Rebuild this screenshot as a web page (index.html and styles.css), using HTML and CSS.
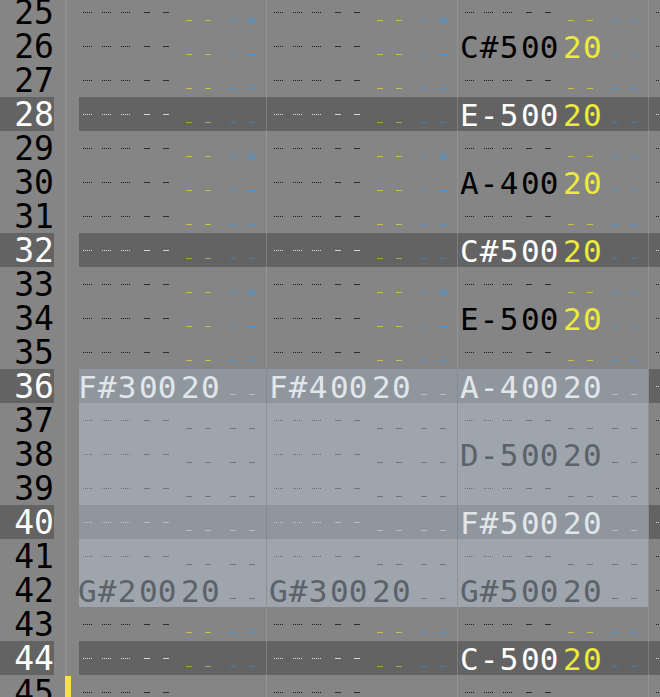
FILE: index.html
```html
<!DOCTYPE html>
<html>
<head>
<meta charset="utf-8">
<link rel="stylesheet" href="styles.css">
</head>
<body>
<div class="grid">

<div class="row"><div class="rn">25</div><div class="g1"></div><div class="vl"></div><div class="g2"></div>
<div class="trk first"><div class="nc"><i></i><i></i><i></i></div><div class="ic"><b></b><b></b></div><div class="vc"><b></b><b></b></div><div class="pc"><b></b><b></b></div></div><div class="sep"></div>
<div class="trk"><div class="nc"><i></i><i></i><i></i></div><div class="ic"><b></b><b></b></div><div class="vc"><b></b><b></b></div><div class="pc"><b></b><b></b></div></div><div class="sep"></div>
<div class="trk"><div class="nc"><i></i><i></i><i></i></div><div class="ic"><b></b><b></b></div><div class="vc"><b></b><b></b></div><div class="pc"><b></b><b></b></div></div><div class="sep"></div>
<div class="trk last"><div class="nc"><i></i><i></i><i></i></div></div></div>

<div class="row"><div class="rn">26</div><div class="g1"></div><div class="vl"></div><div class="g2"></div>
<div class="trk first"><div class="nc"><i></i><i></i><i></i></div><div class="ic"><b></b><b></b></div><div class="vc"><b></b><b></b></div><div class="pc"><b></b><b></b></div></div><div class="sep"></div>
<div class="trk"><div class="nc"><i></i><i></i><i></i></div><div class="ic"><b></b><b></b></div><div class="vc"><b></b><b></b></div><div class="pc"><b></b><b></b></div></div><div class="sep"></div>
<div class="trk"><div class="nc t">C#5</div><div class="ic t">00</div><div class="vc t">20</div><div class="pc"><b></b><b></b></div></div><div class="sep"></div>
<div class="trk last"><div class="nc"><i></i><i></i><i></i></div></div></div>

<div class="row"><div class="rn">27</div><div class="g1"></div><div class="vl"></div><div class="g2"></div>
<div class="trk first"><div class="nc"><i></i><i></i><i></i></div><div class="ic"><b></b><b></b></div><div class="vc"><b></b><b></b></div><div class="pc"><b></b><b></b></div></div><div class="sep"></div>
<div class="trk"><div class="nc"><i></i><i></i><i></i></div><div class="ic"><b></b><b></b></div><div class="vc"><b></b><b></b></div><div class="pc"><b></b><b></b></div></div><div class="sep"></div>
<div class="trk"><div class="nc"><i></i><i></i><i></i></div><div class="ic"><b></b><b></b></div><div class="vc"><b></b><b></b></div><div class="pc"><b></b><b></b></div></div><div class="sep"></div>
<div class="trk last"><div class="nc"><i></i><i></i><i></i></div></div></div>

<div class="row hl"><div class="rn">28</div><div class="g1"></div><div class="vl"></div><div class="g2"></div>
<div class="trk first"><div class="nc"><i></i><i></i><i></i></div><div class="ic"><b></b><b></b></div><div class="vc"><b></b><b></b></div><div class="pc"><b></b><b></b></div></div><div class="sep"></div>
<div class="trk"><div class="nc"><i></i><i></i><i></i></div><div class="ic"><b></b><b></b></div><div class="vc"><b></b><b></b></div><div class="pc"><b></b><b></b></div></div><div class="sep"></div>
<div class="trk"><div class="nc t">E-5</div><div class="ic t">00</div><div class="vc t">20</div><div class="pc"><b></b><b></b></div></div><div class="sep"></div>
<div class="trk last"><div class="nc"><i></i><i></i><i></i></div></div></div>

<div class="row"><div class="rn">29</div><div class="g1"></div><div class="vl"></div><div class="g2"></div>
<div class="trk first"><div class="nc"><i></i><i></i><i></i></div><div class="ic"><b></b><b></b></div><div class="vc"><b></b><b></b></div><div class="pc"><b></b><b></b></div></div><div class="sep"></div>
<div class="trk"><div class="nc"><i></i><i></i><i></i></div><div class="ic"><b></b><b></b></div><div class="vc"><b></b><b></b></div><div class="pc"><b></b><b></b></div></div><div class="sep"></div>
<div class="trk"><div class="nc"><i></i><i></i><i></i></div><div class="ic"><b></b><b></b></div><div class="vc"><b></b><b></b></div><div class="pc"><b></b><b></b></div></div><div class="sep"></div>
<div class="trk last"><div class="nc"><i></i><i></i><i></i></div></div></div>

<div class="row"><div class="rn">30</div><div class="g1"></div><div class="vl"></div><div class="g2"></div>
<div class="trk first"><div class="nc"><i></i><i></i><i></i></div><div class="ic"><b></b><b></b></div><div class="vc"><b></b><b></b></div><div class="pc"><b></b><b></b></div></div><div class="sep"></div>
<div class="trk"><div class="nc"><i></i><i></i><i></i></div><div class="ic"><b></b><b></b></div><div class="vc"><b></b><b></b></div><div class="pc"><b></b><b></b></div></div><div class="sep"></div>
<div class="trk"><div class="nc t">A-4</div><div class="ic t">00</div><div class="vc t">20</div><div class="pc"><b></b><b></b></div></div><div class="sep"></div>
<div class="trk last"><div class="nc"><i></i><i></i><i></i></div></div></div>

<div class="row"><div class="rn">31</div><div class="g1"></div><div class="vl"></div><div class="g2"></div>
<div class="trk first"><div class="nc"><i></i><i></i><i></i></div><div class="ic"><b></b><b></b></div><div class="vc"><b></b><b></b></div><div class="pc"><b></b><b></b></div></div><div class="sep"></div>
<div class="trk"><div class="nc"><i></i><i></i><i></i></div><div class="ic"><b></b><b></b></div><div class="vc"><b></b><b></b></div><div class="pc"><b></b><b></b></div></div><div class="sep"></div>
<div class="trk"><div class="nc"><i></i><i></i><i></i></div><div class="ic"><b></b><b></b></div><div class="vc"><b></b><b></b></div><div class="pc"><b></b><b></b></div></div><div class="sep"></div>
<div class="trk last"><div class="nc"><i></i><i></i><i></i></div></div></div>

<div class="row hl"><div class="rn">32</div><div class="g1"></div><div class="vl"></div><div class="g2"></div>
<div class="trk first"><div class="nc"><i></i><i></i><i></i></div><div class="ic"><b></b><b></b></div><div class="vc"><b></b><b></b></div><div class="pc"><b></b><b></b></div></div><div class="sep"></div>
<div class="trk"><div class="nc"><i></i><i></i><i></i></div><div class="ic"><b></b><b></b></div><div class="vc"><b></b><b></b></div><div class="pc"><b></b><b></b></div></div><div class="sep"></div>
<div class="trk"><div class="nc t">C#5</div><div class="ic t">00</div><div class="vc t">20</div><div class="pc"><b></b><b></b></div></div><div class="sep"></div>
<div class="trk last"><div class="nc"><i></i><i></i><i></i></div></div></div>

<div class="row"><div class="rn">33</div><div class="g1"></div><div class="vl"></div><div class="g2"></div>
<div class="trk first"><div class="nc"><i></i><i></i><i></i></div><div class="ic"><b></b><b></b></div><div class="vc"><b></b><b></b></div><div class="pc"><b></b><b></b></div></div><div class="sep"></div>
<div class="trk"><div class="nc"><i></i><i></i><i></i></div><div class="ic"><b></b><b></b></div><div class="vc"><b></b><b></b></div><div class="pc"><b></b><b></b></div></div><div class="sep"></div>
<div class="trk"><div class="nc"><i></i><i></i><i></i></div><div class="ic"><b></b><b></b></div><div class="vc"><b></b><b></b></div><div class="pc"><b></b><b></b></div></div><div class="sep"></div>
<div class="trk last"><div class="nc"><i></i><i></i><i></i></div></div></div>

<div class="row"><div class="rn">34</div><div class="g1"></div><div class="vl"></div><div class="g2"></div>
<div class="trk first"><div class="nc"><i></i><i></i><i></i></div><div class="ic"><b></b><b></b></div><div class="vc"><b></b><b></b></div><div class="pc"><b></b><b></b></div></div><div class="sep"></div>
<div class="trk"><div class="nc"><i></i><i></i><i></i></div><div class="ic"><b></b><b></b></div><div class="vc"><b></b><b></b></div><div class="pc"><b></b><b></b></div></div><div class="sep"></div>
<div class="trk"><div class="nc t">E-5</div><div class="ic t">00</div><div class="vc t">20</div><div class="pc"><b></b><b></b></div></div><div class="sep"></div>
<div class="trk last"><div class="nc"><i></i><i></i><i></i></div></div></div>

<div class="row"><div class="rn">35</div><div class="g1"></div><div class="vl"></div><div class="g2"></div>
<div class="trk first"><div class="nc"><i></i><i></i><i></i></div><div class="ic"><b></b><b></b></div><div class="vc"><b></b><b></b></div><div class="pc"><b></b><b></b></div></div><div class="sep"></div>
<div class="trk"><div class="nc"><i></i><i></i><i></i></div><div class="ic"><b></b><b></b></div><div class="vc"><b></b><b></b></div><div class="pc"><b></b><b></b></div></div><div class="sep"></div>
<div class="trk"><div class="nc"><i></i><i></i><i></i></div><div class="ic"><b></b><b></b></div><div class="vc"><b></b><b></b></div><div class="pc"><b></b><b></b></div></div><div class="sep"></div>
<div class="trk last"><div class="nc"><i></i><i></i><i></i></div></div></div>

<div class="row hl"><div class="rn">36</div><div class="g1"></div><div class="vl"></div><div class="g2"></div>
<div class="trk first sel"><div class="nc t">F#3</div><div class="ic t">00</div><div class="vc t">20</div><div class="pc"><b></b><b></b></div></div><div class="sep sel"></div>
<div class="trk sel"><div class="nc t">F#4</div><div class="ic t">00</div><div class="vc t">20</div><div class="pc"><b></b><b></b></div></div><div class="sep sel"></div>
<div class="trk sel"><div class="nc t">A-4</div><div class="ic t">00</div><div class="vc t">20</div><div class="pc"><b></b><b></b></div></div><div class="sep sel"></div>
<div class="trk last"><div class="nc"><i></i><i></i><i></i></div></div></div>

<div class="row"><div class="rn">37</div><div class="g1"></div><div class="vl"></div><div class="g2"></div>
<div class="trk first sel"><div class="nc"><i></i><i></i><i></i></div><div class="ic"><b></b><b></b></div><div class="vc"><b></b><b></b></div><div class="pc"><b></b><b></b></div></div><div class="sep sel"></div>
<div class="trk sel"><div class="nc"><i></i><i></i><i></i></div><div class="ic"><b></b><b></b></div><div class="vc"><b></b><b></b></div><div class="pc"><b></b><b></b></div></div><div class="sep sel"></div>
<div class="trk sel"><div class="nc"><i></i><i></i><i></i></div><div class="ic"><b></b><b></b></div><div class="vc"><b></b><b></b></div><div class="pc"><b></b><b></b></div></div><div class="sep sel"></div>
<div class="trk last"><div class="nc"><i></i><i></i><i></i></div></div></div>

<div class="row"><div class="rn">38</div><div class="g1"></div><div class="vl"></div><div class="g2"></div>
<div class="trk first sel"><div class="nc"><i></i><i></i><i></i></div><div class="ic"><b></b><b></b></div><div class="vc"><b></b><b></b></div><div class="pc"><b></b><b></b></div></div><div class="sep sel"></div>
<div class="trk sel"><div class="nc"><i></i><i></i><i></i></div><div class="ic"><b></b><b></b></div><div class="vc"><b></b><b></b></div><div class="pc"><b></b><b></b></div></div><div class="sep sel"></div>
<div class="trk sel"><div class="nc t">D-5</div><div class="ic t">00</div><div class="vc t">20</div><div class="pc"><b></b><b></b></div></div><div class="sep sel"></div>
<div class="trk last"><div class="nc"><i></i><i></i><i></i></div></div></div>

<div class="row"><div class="rn">39</div><div class="g1"></div><div class="vl"></div><div class="g2"></div>
<div class="trk first sel"><div class="nc"><i></i><i></i><i></i></div><div class="ic"><b></b><b></b></div><div class="vc"><b></b><b></b></div><div class="pc"><b></b><b></b></div></div><div class="sep sel"></div>
<div class="trk sel"><div class="nc"><i></i><i></i><i></i></div><div class="ic"><b></b><b></b></div><div class="vc"><b></b><b></b></div><div class="pc"><b></b><b></b></div></div><div class="sep sel"></div>
<div class="trk sel"><div class="nc"><i></i><i></i><i></i></div><div class="ic"><b></b><b></b></div><div class="vc"><b></b><b></b></div><div class="pc"><b></b><b></b></div></div><div class="sep sel"></div>
<div class="trk last"><div class="nc"><i></i><i></i><i></i></div></div></div>

<div class="row hl"><div class="rn">40</div><div class="g1"></div><div class="vl"></div><div class="g2"></div>
<div class="trk first sel"><div class="nc"><i></i><i></i><i></i></div><div class="ic"><b></b><b></b></div><div class="vc"><b></b><b></b></div><div class="pc"><b></b><b></b></div></div><div class="sep sel"></div>
<div class="trk sel"><div class="nc"><i></i><i></i><i></i></div><div class="ic"><b></b><b></b></div><div class="vc"><b></b><b></b></div><div class="pc"><b></b><b></b></div></div><div class="sep sel"></div>
<div class="trk sel"><div class="nc t">F#5</div><div class="ic t">00</div><div class="vc t">20</div><div class="pc"><b></b><b></b></div></div><div class="sep sel"></div>
<div class="trk last"><div class="nc"><i></i><i></i><i></i></div></div></div>

<div class="row"><div class="rn">41</div><div class="g1"></div><div class="vl"></div><div class="g2"></div>
<div class="trk first sel"><div class="nc"><i></i><i></i><i></i></div><div class="ic"><b></b><b></b></div><div class="vc"><b></b><b></b></div><div class="pc"><b></b><b></b></div></div><div class="sep sel"></div>
<div class="trk sel"><div class="nc"><i></i><i></i><i></i></div><div class="ic"><b></b><b></b></div><div class="vc"><b></b><b></b></div><div class="pc"><b></b><b></b></div></div><div class="sep sel"></div>
<div class="trk sel"><div class="nc"><i></i><i></i><i></i></div><div class="ic"><b></b><b></b></div><div class="vc"><b></b><b></b></div><div class="pc"><b></b><b></b></div></div><div class="sep sel"></div>
<div class="trk last"><div class="nc"><i></i><i></i><i></i></div></div></div>

<div class="row"><div class="rn">42</div><div class="g1"></div><div class="vl"></div><div class="g2"></div>
<div class="trk first sel"><div class="nc t">G#2</div><div class="ic t">00</div><div class="vc t">20</div><div class="pc"><b></b><b></b></div></div><div class="sep sel"></div>
<div class="trk sel"><div class="nc t">G#3</div><div class="ic t">00</div><div class="vc t">20</div><div class="pc"><b></b><b></b></div></div><div class="sep sel"></div>
<div class="trk sel"><div class="nc t">G#5</div><div class="ic t">00</div><div class="vc t">20</div><div class="pc"><b></b><b></b></div></div><div class="sep sel"></div>
<div class="trk last"><div class="nc"><i></i><i></i><i></i></div></div></div>

<div class="row"><div class="rn">43</div><div class="g1"></div><div class="vl"></div><div class="g2"></div>
<div class="trk first"><div class="nc"><i></i><i></i><i></i></div><div class="ic"><b></b><b></b></div><div class="vc"><b></b><b></b></div><div class="pc"><b></b><b></b></div></div><div class="sep"></div>
<div class="trk"><div class="nc"><i></i><i></i><i></i></div><div class="ic"><b></b><b></b></div><div class="vc"><b></b><b></b></div><div class="pc"><b></b><b></b></div></div><div class="sep"></div>
<div class="trk"><div class="nc"><i></i><i></i><i></i></div><div class="ic"><b></b><b></b></div><div class="vc"><b></b><b></b></div><div class="pc"><b></b><b></b></div></div><div class="sep"></div>
<div class="trk last"><div class="nc"><i></i><i></i><i></i></div></div></div>

<div class="row hl"><div class="rn">44</div><div class="g1"></div><div class="vl"></div><div class="g2"></div>
<div class="trk first"><div class="nc"><i></i><i></i><i></i></div><div class="ic"><b></b><b></b></div><div class="vc"><b></b><b></b></div><div class="pc"><b></b><b></b></div></div><div class="sep"></div>
<div class="trk"><div class="nc"><i></i><i></i><i></i></div><div class="ic"><b></b><b></b></div><div class="vc"><b></b><b></b></div><div class="pc"><b></b><b></b></div></div><div class="sep"></div>
<div class="trk"><div class="nc t">C-5</div><div class="ic t">00</div><div class="vc t">20</div><div class="pc"><b></b><b></b></div></div><div class="sep"></div>
<div class="trk last"><div class="nc"><i></i><i></i><i></i></div></div></div>

<div class="row"><div class="rn">45</div><div class="g1"></div><div class="vl"><span class="cursor"></span></div><div class="g2"></div>
<div class="trk first"><div class="nc"><i></i><i></i><i></i></div><div class="ic"><b></b><b></b></div><div class="vc"><b></b><b></b></div><div class="pc"><b></b><b></b></div></div><div class="sep"></div>
<div class="trk"><div class="nc"><i></i><i></i><i></i></div><div class="ic"><b></b><b></b></div><div class="vc"><b></b><b></b></div><div class="pc"><b></b><b></b></div></div><div class="sep"></div>
<div class="trk"><div class="nc"><i></i><i></i><i></i></div><div class="ic"><b></b><b></b></div><div class="vc"><b></b><b></b></div><div class="pc"><b></b><b></b></div></div><div class="sep"></div>
<div class="trk last"><div class="nc"><i></i><i></i><i></i></div></div></div>

</div>
</body>
</html>
```
FILE: styles.css
```css
html, body {
  margin: 0;
  padding: 0;
}
body {
  background: #858585;
  width: 660px;
  height: 697px;
  overflow: hidden;
  font-family: "DejaVu Sans Mono", "Liberation Mono", monospace;
}
.grid {
  margin-top: -5px;
  width: 660px;
  overflow: hidden;
}
.row {
  display: flex;
  height: 34px;
}
.rn {
  width: 54px;
  height: 34px;
  flex: none;
  text-align: right;
  font-size: 33px;
  line-height: 32px;
  padding-top: 2px;
  color: #000;
  box-sizing: border-box;
}
.row.hl .rn {
  background: #636363;
  color: #fff;
}
.g1 { width: 11px; flex: none; }
.vl {
  width: 2px;
  flex: none;
  background: #8f8f8f;
  position: relative;
}
.g2 { width: 12px; flex: none; }
.cursor {
  position: absolute;
  left: 0;
  top: 1px;
  width: 6px;
  height: 33px;
  background: #f6e14a;
}
.trk {
  width: 190px;
  flex: none;
  display: flex;
}
.trk.first { width: 187px; }
.trk.first > .nc { margin-left: -3px; }
.trk.last { flex: 1; width: auto; min-width: 0; overflow: hidden; }
.sep {
  width: 1px;
  flex: none;
  background: #939393;
}
.row.hl .trk { background: #636363; }
.row.hl .sep { background: #7c7c7c; }
.trk.sel { background: #9ea5ad; }
.row.hl .trk.sel { background: #8f969e; }
.sep.sel { background: #8b9198; }
.row.hl .sep.sel { background: #858b92; }

/* sub columns */
.nc, .ic, .vc, .pc {
  display: flex;
  flex: none;
  box-sizing: border-box;
  align-items: flex-start;
}
.nc { width: 61px; padding-left: 7px; gap: 10px; }
.ic { width: 43px; padding-left: 7px; gap: 13px; }
.vc { width: 41px; padding-left: 6px; gap: 13px; }
.pc { width: 45px; padding-left: 9px; gap: 13px; }

.nc i {
  display: block;
  width: 9px;
  height: 0;
  margin-top: 17px;
  border-top: 1px dotted #1c1c1c;
}
.ic b, .vc b, .pc b {
  display: block;
  width: 6px;
  height: 1px;
}
.ic b { margin-top: 17px; background: #2e2e2e; }
.vc b { margin-top: 25px; background: #c6c345; }
.pc b { margin-top: 25px; background: #4a93d2; }

.row.hl .nc i { border-top-color: #dcdcdc; }
.row.hl .ic b { background: #d2d2d2; }
.row.hl .vc b { background: #a9a845; }
.row.hl .pc b { background: #3f7eb2; }

/* text cells */
.t {
  display: block;
  height: 34px;
  font-size: 31px;
  line-height: 32px;
  padding-top: 2px;
  color: #000;
  white-space: pre;
}
.nc.t { padding-left: 2px; letter-spacing: 1.2px; }
.ic.t { padding-left: 2px; letter-spacing: 0; }
.vc.t { padding-left: 1px; letter-spacing: 1.3px; color: #ecea3a; }
.row.hl .t { color: #fff; }
.row.hl .vc.t { color: #ecea3a; }

/* selection */
.trk.sel .t, .trk.sel .vc.t { color: #5b626a; }
.row.hl .trk.sel .t, .row.hl .trk.sel .vc.t { color: #e1e6eb; }
.trk.sel .nc i { border-top-color: #6b7179; }
.trk.sel .ic b, .trk.sel .vc b, .trk.sel .pc b { background: #6f767e; }
.row.hl .trk.sel .nc i { border-top-color: #c2c8ce; }
.row.hl .trk.sel .ic b, .row.hl .trk.sel .vc b, .row.hl .trk.sel .pc b { background: #b7bdc3; }
```
